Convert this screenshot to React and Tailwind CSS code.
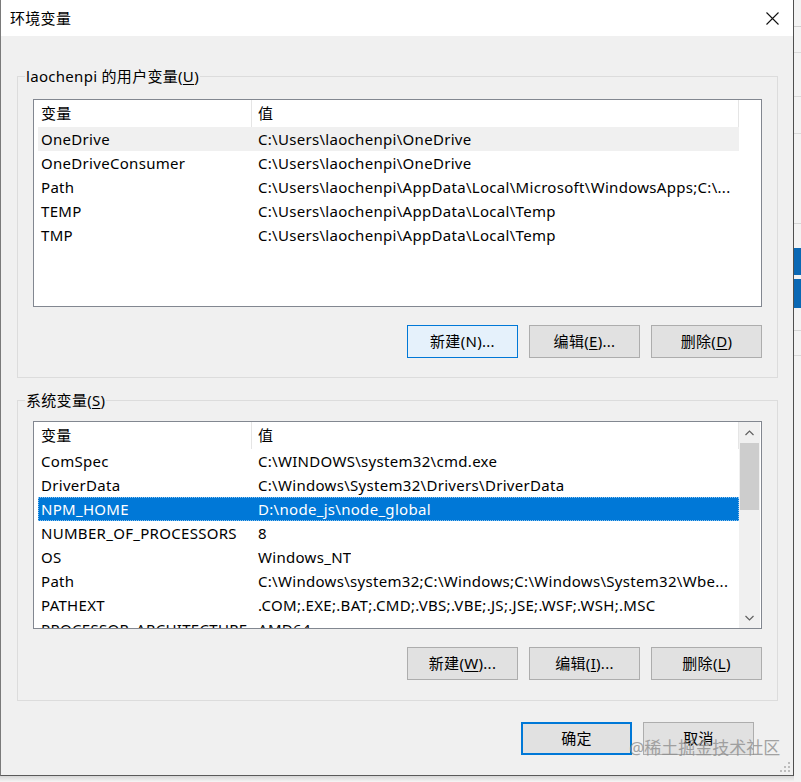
import React from "react";

const F = "font-['Noto_Sans','Noto_Sans_CJK_SC',sans-serif]";

const userRows = [
  ["OneDrive", "C:\\Users\\laochenpi\\OneDrive", "hover"],
  ["OneDriveConsumer", "C:\\Users\\laochenpi\\OneDrive"],
  ["Path", "C:\\Users\\laochenpi\\AppData\\Local\\Microsoft\\WindowsApps;C:\\..."],
  ["TEMP", "C:\\Users\\laochenpi\\AppData\\Local\\Temp"],
  ["TMP", "C:\\Users\\laochenpi\\AppData\\Local\\Temp"],
];

const sysRows = [
  ["ComSpec", "C:\\WINDOWS\\system32\\cmd.exe"],
  ["DriverData", "C:\\Windows\\System32\\Drivers\\DriverData"],
  ["NPM_HOME", "D:\\node_js\\node_global", "sel"],
  ["NUMBER_OF_PROCESSORS", "8"],
  ["OS", "Windows_NT"],
  ["Path", "C:\\Windows\\system32;C:\\Windows;C:\\Windows\\System32\\Wbe..."],
  ["PATHEXT", ".COM;.EXE;.BAT;.CMD;.VBS;.VBE;.JS;.JSE;.WSF;.WSH;.MSC"],
  ["PROCESSOR_ARCHITECTURE", "AMD64"],
];

function Chevron({ up }) {
  return (
    <svg width="9" height="6" viewBox="0 0 9 6" className="block">
      <path
        d={up ? "M0.5 5 L4.5 1 L8.5 5" : "M0.5 1 L4.5 5 L8.5 1"}
        fill="none"
        stroke="#606060"
        strokeWidth="1.2"
      />
    </svg>
  );
}

function Row({ name, value, kind }) {
  const bg =
    kind === "sel"
      ? "bg-[#0078d7] text-white border border-dotted border-[#8cc4f0]"
      : kind === "hover"
      ? "bg-[#f0f0f0] border border-transparent"
      : "border border-transparent";
  return (
    <div className={`ml-[4px] w-[701px] h-[24px] shrink-0 flex items-center whitespace-nowrap ${bg}`}>
      <div className="w-[212px] pl-[2px] leading-[21px] overflow-hidden">{name}</div>
      <div className="pl-[7px] leading-[21px] overflow-hidden">{value}</div>
    </div>
  );
}

function List({ rows, headerH, scroll }) {
  return (
    <div className="ml-[15px] w-[729px] h-[208px] border border-[#828790] bg-white flex overflow-hidden">
      <div className="w-[705px] flex flex-col shrink-0">
        <div className={`flex shrink-0 ${headerH}`}>
          <div className="w-[218px] pl-[7px] border-r border-[#e5e5e5] flex items-center">变量</div>
          <div className="w-[487px] pl-[6px] border-r border-[#e5e5e5] flex items-center">值</div>
        </div>
        {rows.map((r, i) => (
          <Row key={i} name={r[0]} value={r[1]} kind={r[2]} />
        ))}
      </div>
      {scroll ? (
        <div className="w-[21px] h-full bg-[#f0f0f0] flex flex-col items-center shrink-0">
          <div className="h-[21px] flex items-center justify-center">
            <Chevron up />
          </div>
          <div className="w-[19px] h-[67px] bg-[#cdcdcd]" />
          <div className="flex-1" />
          <div className="h-[21px] flex items-center justify-center">
            <Chevron />
          </div>
        </div>
      ) : null}
    </div>
  );
}

function Btn({ children, variant }) {
  const cls =
    variant === "focus"
      ? "bg-[#e5f1fb] border border-[#0078d7]"
      : variant === "default"
      ? "bg-[#e1e1e1] border-2 border-[#0078d7]"
      : "bg-[#e1e1e1] border border-[#adadad]";
  return (
    <div className={`w-[111px] h-[33px] flex items-center justify-center ${cls}`}>
      {children}
    </div>
  );
}

function U({ children }) {
  return <span className="underline underline-offset-[2px] decoration-1">{children}</span>;
}

function Group({ label, legendTop, listTop, rows, headerH, scroll, buttons, pb }) {
  return (
    <fieldset className={`border border-[#dcdcdc] ${legendTop} ${pb}`}>
      <legend className="ml-[7px] px-[1px] leading-[20px]">{label}</legend>
      <div className={listTop}>
        <List rows={rows} headerH={headerH} scroll={scroll} />
      </div>
      <div className="mt-[18px] flex justify-end gap-[11px] pr-[15px]">{buttons}</div>
    </fieldset>
  );
}

export default function App() {
  return (
    <div className={`relative flex w-[801px] h-[782px] bg-[#f6f6f6] text-[15px] tracking-[0.3px] text-black ${F}`}>
      <div className="flex flex-col shrink-0">
        <div className="relative w-[794px] h-[776px] flex flex-col border-l border-r border-b border-l-[#7a7a7a] border-r-[#4f4f4f] border-b-[#5a5a5a] bg-[#f0f0f0]">
          <div className="h-[36px] bg-white flex items-center justify-between pl-[9px] pr-[14px] shrink-0">
            <span className="leading-[20px]">环境变量</span>
            <svg width="13" height="13" viewBox="0 0 13 13">
              <path d="M0.5 0.5 L12.5 12.5 M12.5 0.5 L0.5 12.5" stroke="#111" strokeWidth="1.1" />
            </svg>
          </div>
          <div className="flex flex-col pl-[16px] pr-[15px]">
            <Group
              label={
                <>
                  laochenpi 的用户变量(<U>U</U>)
                </>
              }
              legendTop="mt-[30px]"
              listTop="mt-[13px]"
              rows={userRows}
              headerH="h-[27px]"
              pb="pb-[19px]"
              buttons={
                <>
                  <Btn variant="focus">新建(N)...</Btn>
                  <Btn>
                    编辑(<U>E</U>)...
                  </Btn>
                  <Btn>
                    删除(<U>D</U>)
                  </Btn>
                </>
              }
            />
            <Group
              label={
                <>
                  系统变量(<U>S</U>)
                </>
              }
              legendTop="mt-[12px]"
              listTop="mt-[11px]"
              rows={sysRows}
              headerH="h-[27px]"
              scroll
              pb="pb-[20px]"
              buttons={
                <>
                  <Btn>
                    新建(<U>W</U>)...
                  </Btn>
                  <Btn>
                    编辑(<U>I</U>)...
                  </Btn>
                  <Btn>
                    删除(<U>L</U>)
                  </Btn>
                </>
              }
            />
            <div className="mt-[21px] flex justify-end gap-[11px] pr-[24px]">
              <Btn variant="default">确定</Btn>
              <Btn>取消</Btn>
            </div>
          </div>
          <svg className="absolute right-[3px] bottom-[3px]" width="10" height="10" viewBox="0 0 10 10">
            <rect x="8" y="0" width="2" height="2" fill="#bdbdbd" />
            <rect x="4" y="4" width="2" height="2" fill="#bdbdbd" />
            <rect x="8" y="4" width="2" height="2" fill="#bdbdbd" />
            <rect x="0" y="8" width="2" height="2" fill="#bdbdbd" />
            <rect x="4" y="8" width="2" height="2" fill="#bdbdbd" />
            <rect x="8" y="8" width="2" height="2" fill="#bdbdbd" />
          </svg>
        </div>
        <div className="h-[6px] bg-gradient-to-b from-[#d6d6d6] to-[#f6f6f6]" />
      </div>
      <div className="flex-1 flex flex-col bg-[#f3f3f3]">
        <div className="h-[27px] border-b border-[#cfcfcf]" />
        <div className="h-[26px] border-b border-[#dadada]" />
        <div className="h-[44px] border-b border-[#dadada]" />
        <div className="h-[37px] border-b border-[#dadada]" />
        <div className="h-[90px] border-b border-[#d6d6d6]" />
        <div className="h-[24px]" />
        <div className="h-[27px] bg-[#0a68b4]" />
        <div className="h-[4px]" />
        <div className="h-[29px] bg-[#0a68b4]" />
        <div className="h-[23px] border-b border-[#d6d6d6]" />
        <div className="h-[25px] border-b border-[#dadada]" />
        <div className="flex-1" />
      </div>
      <div className="absolute left-[629px] top-[737px] text-[17px] leading-[22px] tracking-normal text-[#8f8f8f] opacity-80 whitespace-nowrap">
        @稀土掘金技术社区
      </div>
    </div>
  );
}
